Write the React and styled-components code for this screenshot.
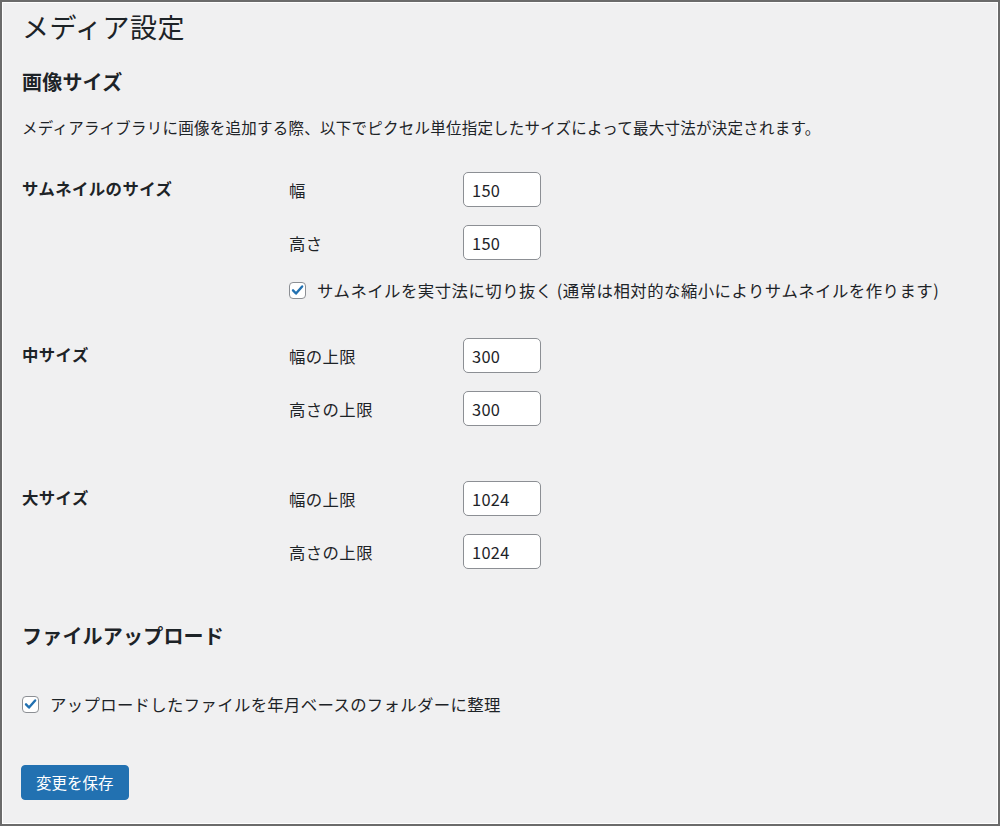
import React from 'react';
import styled, { createGlobalStyle } from 'styled-components';

const GlobalStyle = createGlobalStyle`
  * { box-sizing: border-box; }
  body {
    margin: 0;
    background: #f0f0f1;
    color: #1d2327;
    font-family: "Noto Sans CJK JP", "Noto Sans", sans-serif;
  }
`;

const Frame = styled.div`
  width: 1000px;
  height: 826px;
  border: 2px solid #6b6b6b;
  box-shadow: inset 0 0 0 1px #ffffff;
  background: #f0f0f1;
  padding: 7px 20px 0 20px;
  display: flex;
  flex-direction: column;
  overflow: hidden;
`;

const Title = styled.h1`
  margin: 0;
  font-size: 27px;
  font-weight: 400;
  line-height: 36px;
  letter-spacing: 0.5px;
`;

const SectionTitle = styled.h2`
  margin: ${p => p.$top}px 0 0;
  font-size: 20px;
  font-weight: 700;
  line-height: 28px;
  letter-spacing: 0.2px;
`;

const Lead = styled.p`
  margin: 20px 0 0;
  font-size: 15.5px;
  line-height: 22px;
  letter-spacing: 0.24px;
`;

const SettingRow = styled.div`
  display: grid;
  grid-template-columns: 267px 1fr;
  margin-top: ${p => p.$top}px;
`;

const RowLabel = styled.div`
  padding-top: 5px;
  font-size: 16.4px;
  font-weight: 700;
  line-height: 22px;
  letter-spacing: 0.4px;
`;

const Fields = styled.div`
  display: flex;
  flex-direction: column;
  gap: 18px;
`;

const FieldLine = styled.label`
  display: flex;
  align-items: center;
`;

const FieldName = styled.span`
  width: 174px;
  font-size: 16.4px;
  line-height: 22px;
  letter-spacing: 0.4px;
`;

const NumberInput = styled.input`
  width: 78px;
  height: 35px;
  padding: 0 8px;
  border: 1px solid #8c8f94;
  border-radius: 5px;
  background: #ffffff;
  color: #1d2327;
  font-family: "Noto Sans CJK JP", "Noto Sans", sans-serif;
  font-size: 16.4px;
  letter-spacing: 0.3px;
  outline: none;
`;

const CheckLine = styled.label`
  display: flex;
  align-items: center;
  gap: 11px;
  margin-top: ${p => p.$top || 0}px;
  font-size: 16.4px;
  line-height: 22px;
  letter-spacing: ${p => p.$spacing || 0.4}px;
`;

const CheckBox = styled.span`
  width: 17px;
  height: 17px;
  flex: none;
  border: 1px solid #8c8f94;
  border-radius: 4px;
  background: #ffffff;
  display: flex;
  align-items: center;
  justify-content: center;
`;

const SaveButton = styled.button`
  align-self: flex-start;
  margin-top: 50px;
  margin-left: -1px;
  height: 35px;
  padding: 0 14px;
  border: 1px solid #2271b1;
  border-radius: 4px;
  background: #2271b1;
  color: #ffffff;
  font-family: "Noto Sans CJK JP", "Noto Sans", sans-serif;
  font-size: 15.5px;
  line-height: 33px;
`;

const Check = () => (
  <CheckBox>
    <svg width="16" height="16" viewBox="0 0 20 20">
      <path d="M4 10.5l4 4.2 8.2-9.4" fill="none" stroke="#2271b1" strokeWidth="3.2" strokeLinecap="round" strokeLinejoin="round" />
    </svg>
  </CheckBox>
);

const Field = ({ name, value }) => (
  <FieldLine>
    <FieldName>{name}</FieldName>
    <NumberInput type="text" defaultValue={value} />
  </FieldLine>
);

export default function App() {
  return (
    <>
      <GlobalStyle />
      <Frame>
        <Title>メディア設定</Title>
        <SectionTitle $top={23}>画像サイズ</SectionTitle>
        <Lead>メディアライブラリに画像を追加する際、以下でピクセル単位指定したサイズによって最大寸法が決定されます。</Lead>

        <SettingRow $top={34}>
          <RowLabel>サムネイルのサイズ</RowLabel>
          <Fields>
            <Field name="幅" value="150" />
            <Field name="高さ" value="150" />
            <CheckLine $top={1} $spacing={0.47}>
              <Check />
              サムネイルを実寸法に切り抜く (通常は相対的な縮小によりサムネイルを作ります)
            </CheckLine>
          </Fields>
        </SettingRow>

        <SettingRow $top={37}>
          <RowLabel>中サイズ</RowLabel>
          <Fields>
            <Field name="幅の上限" value="300" />
            <Field name="高さの上限" value="300" />
          </Fields>
        </SettingRow>

        <SettingRow $top={55}>
          <RowLabel>大サイズ</RowLabel>
          <Fields>
            <Field name="幅の上限" value="1024" />
            <Field name="高さの上限" value="1024" />
          </Fields>
        </SettingRow>

        <SectionTitle $top={53}>ファイルアップロード</SectionTitle>
        <CheckLine $top={43} $spacing={0.33}>
          <Check />
          アップロードしたファイルを年月ベースのフォルダーに整理
        </CheckLine>

        <SaveButton type="button">変更を保存</SaveButton>
      </Frame>
    </>
  );
}
